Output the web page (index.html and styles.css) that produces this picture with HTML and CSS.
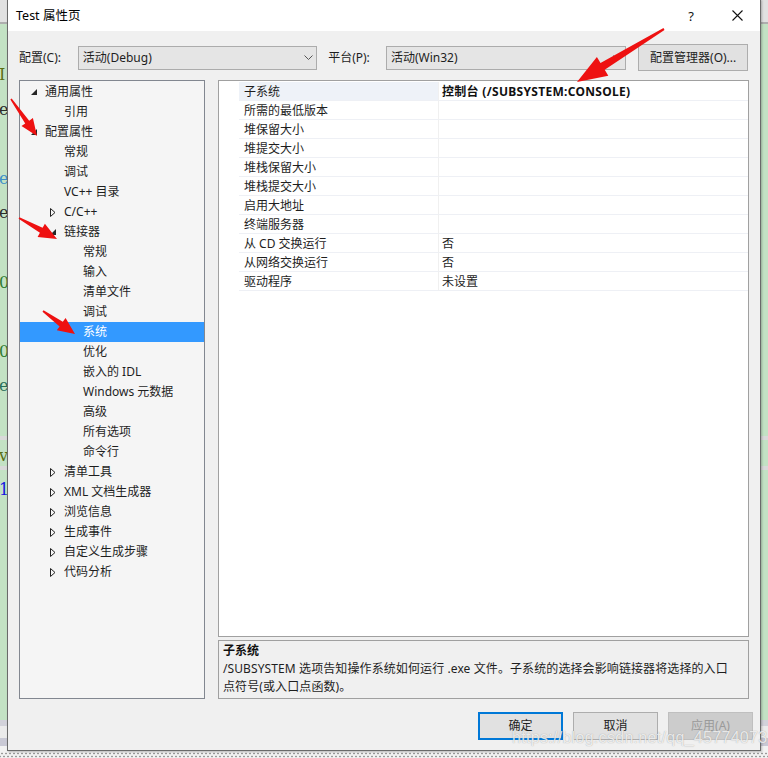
FILE: index.html
```html
<!DOCTYPE html>
<html lang="zh">
<head>
<meta charset="utf-8">
<title>Test 属性页</title>
<link rel="stylesheet" href="styles.css">
</head>
<body>
<div class="desktop">
  <div class="code">
    <div class="cl"><span class="f-olive">I</span><span></span></div>
    <div class="cl"><span class="f-dark">e.</span><span></span></div>
    <div class="cl"><span></span><span></span></div>
    <div class="cl"><span class="f-blue">e</span><span></span></div>
    <div class="cl"><span class="f-dark">e;</span><span></span></div>
    <div class="cl"><span></span><span></span></div>
    <div class="cl"><span class="f-green">01</span><span class="f-green right">d</span></div>
    <div class="cl"><span></span><span></span></div>
    <div class="cl"><span class="f-green">01</span><span></span></div>
    <div class="cl"><span class="f-teal">e</span><span></span></div>
    <div class="cl"><span></span><span></span></div>
    <div class="cl"><span class="f-olive">v</span><span></span></div>
    <div class="cl"><span class="f-navy">1</span><span></span></div>
  </div>

  <div class="dialog">
    <div class="titlebar">
      <span class="title">Test 属性页</span>
      <span class="help">?</span>
      <svg class="close" width="11" height="11" viewBox="0 0 11 11"><path d="M0.5 0.5 L10.5 10.5 M10.5 0.5 L0.5 10.5" stroke="#111" stroke-width="1.1" fill="none"/></svg>
    </div>

    <div class="toolbar">
      <span class="lbl lbl-cfg">配置(C):</span>
      <div class="combo combo-cfg"><span>活动(Debug)</span><svg class="chev" width="9" height="5" viewBox="0 0 9 5"><path d="M0.5 0.5 L4.5 4.5 L8.5 0.5" stroke="#555" fill="none"/></svg></div>
      <span class="lbl lbl-plat">平台(P):</span>
      <div class="combo combo-plat"><span>活动(Win32)</span><svg class="chev" width="9" height="5" viewBox="0 0 9 5"><path d="M0.5 0.5 L4.5 4.5 L8.5 0.5" stroke="#555" fill="none"/></svg></div>
      <button class="btn btn-mgr">配置管理器(O)...</button>
    </div>

    <div class="main">
      <div class="tree">
        <div class="node l0"><span class="tg"><svg width="6" height="6" viewBox="0 0 6 6"><path d="M6 0 L6 6 L0 6 Z" fill="#262626"/></svg></span><span>通用属性</span></div>
        <div class="node l1"><span class="tg"></span><span>引用</span></div>
        <div class="node l0"><span class="tg"><svg width="6" height="6" viewBox="0 0 6 6"><path d="M6 0 L6 6 L0 6 Z" fill="#262626"/></svg></span><span>配置属性</span></div>
        <div class="node l1"><span class="tg"></span><span>常规</span></div>
        <div class="node l1"><span class="tg"></span><span>调试</span></div>
        <div class="node l1"><span class="tg"></span><span>VC++ 目录</span></div>
        <div class="node l1"><span class="tg"><svg width="6" height="9" viewBox="0 0 6 9"><path d="M0.5 0.5 L5 4.5 L0.5 8.5 Z" fill="none" stroke="#222"/></svg></span><span>C/C++</span></div>
        <div class="node l1"><span class="tg"><svg width="6" height="6" viewBox="0 0 6 6"><path d="M6 0 L6 6 L0 6 Z" fill="#262626"/></svg></span><span>链接器</span></div>
        <div class="node l2"><span class="tg"></span><span>常规</span></div>
        <div class="node l2"><span class="tg"></span><span>输入</span></div>
        <div class="node l2"><span class="tg"></span><span>清单文件</span></div>
        <div class="node l2"><span class="tg"></span><span>调试</span></div>
        <div class="node l2 sel"><span class="tg"></span><span>系统</span></div>
        <div class="node l2"><span class="tg"></span><span>优化</span></div>
        <div class="node l2"><span class="tg"></span><span>嵌入的 IDL</span></div>
        <div class="node l2"><span class="tg"></span><span>Windows 元数据</span></div>
        <div class="node l2"><span class="tg"></span><span>高级</span></div>
        <div class="node l2"><span class="tg"></span><span>所有选项</span></div>
        <div class="node l2"><span class="tg"></span><span>命令行</span></div>
        <div class="node l1"><span class="tg"><svg width="6" height="9" viewBox="0 0 6 9"><path d="M0.5 0.5 L5 4.5 L0.5 8.5 Z" fill="none" stroke="#222"/></svg></span><span>清单工具</span></div>
        <div class="node l1"><span class="tg"><svg width="6" height="9" viewBox="0 0 6 9"><path d="M0.5 0.5 L5 4.5 L0.5 8.5 Z" fill="none" stroke="#222"/></svg></span><span>XML 文档生成器</span></div>
        <div class="node l1"><span class="tg"><svg width="6" height="9" viewBox="0 0 6 9"><path d="M0.5 0.5 L5 4.5 L0.5 8.5 Z" fill="none" stroke="#222"/></svg></span><span>浏览信息</span></div>
        <div class="node l1"><span class="tg"><svg width="6" height="9" viewBox="0 0 6 9"><path d="M0.5 0.5 L5 4.5 L0.5 8.5 Z" fill="none" stroke="#222"/></svg></span><span>生成事件</span></div>
        <div class="node l1"><span class="tg"><svg width="6" height="9" viewBox="0 0 6 9"><path d="M0.5 0.5 L5 4.5 L0.5 8.5 Z" fill="none" stroke="#222"/></svg></span><span>自定义生成步骤</span></div>
        <div class="node l1"><span class="tg"><svg width="6" height="9" viewBox="0 0 6 9"><path d="M0.5 0.5 L5 4.5 L0.5 8.5 Z" fill="none" stroke="#222"/></svg></span><span>代码分析</span></div>
      </div>

      <div class="right">
        <div class="grid">
          <div class="row"><div class="gut"></div><div class="name cur">子系统</div><div class="val bold">控制台 (/SUBSYSTEM:CONSOLE)</div></div>
          <div class="row"><div class="gut"></div><div class="name">所需的最低版本</div><div class="val"></div></div>
          <div class="row"><div class="gut"></div><div class="name">堆保留大小</div><div class="val"></div></div>
          <div class="row"><div class="gut"></div><div class="name">堆提交大小</div><div class="val"></div></div>
          <div class="row"><div class="gut"></div><div class="name">堆栈保留大小</div><div class="val"></div></div>
          <div class="row"><div class="gut"></div><div class="name">堆栈提交大小</div><div class="val"></div></div>
          <div class="row"><div class="gut"></div><div class="name">启用大地址</div><div class="val"></div></div>
          <div class="row"><div class="gut"></div><div class="name">终端服务器</div><div class="val"></div></div>
          <div class="row"><div class="gut"></div><div class="name">从 CD 交换运行</div><div class="val">否</div></div>
          <div class="row"><div class="gut"></div><div class="name">从网络交换运行</div><div class="val">否</div></div>
          <div class="row"><div class="gut"></div><div class="name">驱动程序</div><div class="val">未设置</div></div>
        </div>
        <div class="desc">
          <div class="desc-title">子系统</div>
          <div class="desc-text">/SUBSYSTEM 选项告知操作系统如何运行 .exe 文件。子系统的选择会影响链接器将选择的入口<br>点符号(或入口点函数)。</div>
        </div>
      </div>
    </div>

    <div class="buttons">
      <button class="btn dlg default">确定</button>
      <button class="btn dlg">取消</button>
      <button class="btn dlg disabled">应用(A)</button>
    </div>
  </div>

  <svg class="annot" width="768" height="758" viewBox="0 0 768 758">
    <polygon fill="#ee1111" points="663.5,28.1 600.5,63.0 596.9,57.0 577,82 608.3,75.8 604.7,69.8 664.5,29.9"/>
    <polygon fill="#ee1111" points="10.35,99.46 25.2,123.5 21.5,126.1 37,136 32.9,118.1 29.2,120.7 11.65,98.54"/>
    <polygon fill="#ee1111" points="18.6,218.7 39.9,232.75 37.6,236.9 57,239 44.9,223.7 42.6,227.85 19.4,217.3"/>
    <polygon fill="#ee1111" points="42.5,311.65 59.6,326.4 56.8,330.2 75,334 65.6,318.0 62.8,321.8 43.5,310.35"/>
  </svg>

  <div class="watermark">https://blog.csdn.net/qq_45774073</div>
</div>
</body>
</html>
```

FILE: styles.css
```css
html, body {
  margin: 0;
  padding: 0;
}

.desktop {
  position: relative;
  width: 768px;
  height: 758px;
  overflow: hidden;
  font-family: "Noto Sans", "Noto Sans CJK SC", sans-serif;
  font-size: 12px;
  color: #1e1e1e;
  background:
    radial-gradient(circle at 2px 1.5px, #9a9a9a 0.7px, transparent 1.2px) 0 752px / 4px 3px repeat-x,
    radial-gradient(circle at 2px 1.5px, #9a9a9a 0.7px, transparent 1.2px) 2px 755px / 4px 3px repeat-x,
    linear-gradient(to bottom,
      #e1e1e1 0, #e1e1e1 22px,
      #aeaeae 22px, #aeaeae 24px,
      #c3e2c4 24px, #c3e2c4 436px,
      #d9d9d9 436px, #d9d9d9 440px,
      #c3e2c4 440px, #c3e2c4 466px,
      #d9d9d9 466px, #d9d9d9 470px,
      #c3e2c4 470px, #c3e2c4 720px,
      #d2d2da 720px, #d2d2da 726px,
      #ebebeb 726px, #ebebeb 738px,
      #c9c9d5 738px, #c9c9d5 746px,
      #f2f2f2 746px, #f2f2f2 758px);
}

/* background editor text peeking out at the edges */
.code {
  padding-top: 58px;
  font-family: "DejaVu Serif", "Liberation Serif", serif;
  font-size: 16px;
}
.cl {
  height: 34.6px;
  line-height: 34.6px;
  display: flex;
  justify-content: space-between;
  margin-left: -1px;
}
.cl .right { margin-right: -4px; }
.f-olive { color: #5a6e12; }
.f-dark { color: #2b2b2b; }
.f-blue { color: #3d8fc9; }
.f-green { color: #2f7a2f; }
.f-teal { color: #2a6e5a; }
.f-navy { color: #1515e0; }

/* dialog window */
.dialog {
  position: absolute;
  left: 7px;
  top: -1px;
  width: 752px;
  height: 750px;
  border: 1px solid #6a6a6a;
  background: #f0f0f0;
  display: flex;
  flex-direction: column;
  box-shadow: 1px 1px 2px rgba(0,0,0,0.25);
}

.titlebar {
  height: 31px;
  flex: none;
  background: #ffffff;
  display: flex;
  align-items: center;
  padding-left: 8px;
  padding-right: 17px;
}
.title {
  font-size: 12.5px;
  color: #000;
  flex: 1;
  line-height: 16px;
}
.help {
  font-size: 13px;
  color: #111;
  margin-right: 38px;
  line-height: 16px;
}
.close { display: block; }

.toolbar {
  flex: none;
  height: 27px;
  margin-top: 13px;
  padding: 0 12px 0 11px;
  display: flex;
  align-items: center;
}
.lbl {
  line-height: 16px;
  color: #1e1e1e;
}
.lbl-cfg { width: 59px; }
.lbl-plat { width: 58px; margin-left: 11px; }

.combo {
  box-sizing: border-box;
  height: 24px;
  background: #e5e5e5;
  border: 1px solid #acacac;
  display: flex;
  align-items: center;
  justify-content: space-between;
  padding: 0 3px 0 4px;
  line-height: 16px;
}
.combo-cfg { width: 240px; }
.combo-plat { width: 241px; }
.chev { display: block; margin-right: 0; }

.btn {
  font-family: "Noto Sans", "Noto Sans CJK SC", sans-serif;
  font-size: 12px;
  color: #1e1e1e;
  background: #e1e1e1;
  border: 1px solid #adadad;
  box-sizing: border-box;
  padding: 0;
  line-height: 16px;
}
.btn-mgr {
  width: 110px;
  height: 27px;
  margin-left: 12px;
}

.main {
  flex: none;
  height: 619px;
  margin-top: 9px;
  padding: 0 11px;
  display: flex;
  gap: 13px;
}

.tree {
  box-sizing: border-box;
  width: 186px;
  height: 619px;
  background: #f5f5f5;
  border: 1px solid #828790;
  padding-top: 1px;
}
.node {
  height: 20px;
  display: flex;
  align-items: center;
  line-height: 16px;
  color: #1e1e1e;
  white-space: nowrap;
}
.node.l0 { padding-left: 6px; }
.node.l1 { padding-left: 25px; }
.node.l2 { padding-left: 44px; }
.tg {
  width: 19px;
  flex: none;
  display: flex;
  align-items: center;
  padding-left: 5px;
  box-sizing: border-box;
}
.tg svg { display: block; }
.node.sel {
  background: #3399ff;
  color: #ffffff;
}

.right {
  flex: 1;
  display: flex;
  flex-direction: column;
  gap: 3px;
}

.grid {
  box-sizing: border-box;
  height: 557px;
  background: #ffffff;
  border: 1px solid #a0a0a0;
  padding-top: 1px;
}
.row {
  display: grid;
  grid-template-columns: 20px 200px 1fr;
  height: 19px;
}
.row > div {
  box-sizing: border-box;
  line-height: 16px;
  display: flex;
  align-items: center;
  white-space: nowrap;
  padding-top: 1px;
}
.row .name {
  padding-left: 5px;
  border-bottom: 1px solid #eef0f5;
  border-right: 1px solid #f0f0f0;
}
.row .name.cur { background: #eef2f8; }
.row .val {
  padding-left: 3px;
  border-bottom: 1px solid #eef0f5;
}
.row .val.bold { font-weight: bold; color: #111; letter-spacing: 0.3px; }

.desc {
  box-sizing: border-box;
  height: 59px;
  border: 1px solid #a0a0a0;
  background: #f0f0f0;
  padding: 1px 4px 0 4px;
}
.desc-title {
  font-weight: bold;
  line-height: 18px;
  color: #111;
}
.desc-text {
  line-height: 18px;
  color: #1e1e1e;
  white-space: nowrap;
  letter-spacing: 0.1px;
}

.buttons {
  flex: none;
  margin-top: 13px;
  height: 28px;
  padding-right: 7px;
  display: flex;
  justify-content: flex-end;
  gap: 10px;
}
.btn.dlg {
  width: 85px;
  height: 28px;
}
.btn.default {
  border: 2px solid #0078d7;
}
.btn.disabled {
  background: #cccccc;
  border-color: #bfbfbf;
  color: #9a9a9a;
}

/* annotation overlay */
.annot {
  position: absolute;
  left: 0;
  top: 0;
  pointer-events: none;
}

.watermark {
  position: absolute;
  left: 512px;
  top: 729px;
  font-family: "Liberation Sans", Arial, sans-serif;
  font-size: 16px;
  letter-spacing: 0.3px;
  color: rgba(255,255,255,0.8);
  text-shadow: 0 0 1px rgba(90,90,90,0.55);
  white-space: nowrap;
  pointer-events: none;
}
```
